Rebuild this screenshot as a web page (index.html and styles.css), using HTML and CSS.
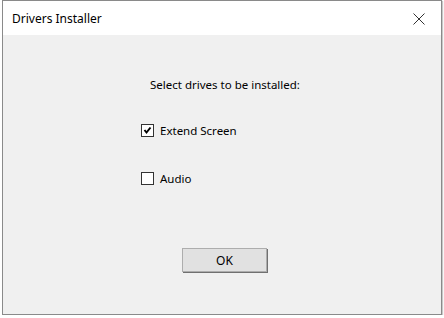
FILE: index.html
```html
<!doctype html>
<html>
  <head>
    <meta charset="UTF-8" />
    <title>Drivers Installer</title>
    <link rel="stylesheet" href="styles.css">
  </head>
  <body>
    <div class="window">
      <div class="titlebar">
        <span class="title">Drivers Installer</span>
        <span class="close">
          <svg width="12" height="12" viewBox="0 0 12 12"><path d="M0.5 0.5 L11.5 11.5 M11.5 0.5 L0.5 11.5" stroke="#333" stroke-width="1" fill="none"/></svg>
        </span>
      </div>
      <div class="client">
        <p class="prompt">Select drives to be installed:</p>
        <div class="options">
          <label class="opt">
            <span class="box">
              <svg width="11" height="11" viewBox="0 0 11 11"><path d="M2.5 5 L4.5 7.5 L8.5 2.5" stroke="#000" stroke-width="2" fill="none"/></svg>
            </span>
            Extend Screen
          </label>
          <label class="opt">
            <span class="box"></span>
            Audio
          </label>
        </div>
        <div class="actions">
          <button class="btn">OK</button>
        </div>
      </div>
    </div>
  </body>
</html>
```

FILE: styles.css
```css
body {
  margin: 0;
  background: #fff;
  font-family: "Noto Sans", "Liberation Sans", sans-serif;
  font-size: 11.5px;
  color: #000;
}
.window {
  margin-left: 2px;
  width: 438px;
  height: 313px;
  border: 1px solid #8a8a8a;
  display: flex;
  flex-direction: column;
  box-shadow: 1px 1px 1px #c8c8c8;
}
.titlebar {
  height: 34px;
  background: #fff;
  display: flex;
  align-items: center;
  justify-content: space-between;
  padding: 0 7px 0 9px;
}
.title {
  font-size: 12px;
  color: #000;
}
.close {
  width: 30px;
  display: flex;
  justify-content: center;
  padding-top: 1px;
}
.client {
  flex: 1;
  background: #f0f0f0;
  display: flex;
  flex-direction: column;
}
.prompt {
  margin: 42px 0 0 147px;
}
.options {
  margin: 31px 0 0 138px;
  display: flex;
  flex-direction: column;
  gap: 33px;
}
.opt {
  display: flex;
  align-items: center;
  gap: 6px;
}
.box {
  width: 11px;
  height: 11px;
  border: 1px solid #333;
  background: #fff;
  display: flex;
}
.actions {
  margin: 62px 0 0 179px;
}
.btn {
  width: 85px;
  height: 24px;
  background: #e1e1e1;
  border: 1px solid #adadad;
  box-shadow: 1px 1px 0 #707070;
  font-family: inherit;
  font-size: 12px;
  color: #000;
  padding: 0;
}
```
